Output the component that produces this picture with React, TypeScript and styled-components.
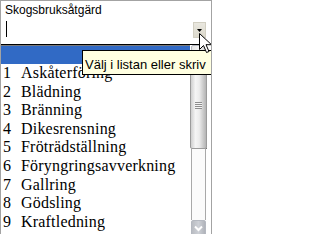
import React from "react";
import styled, { createGlobalStyle } from "styled-components";

const Global = createGlobalStyle`
  html, body { margin: 0; padding: 0; background: #ffffff; }
  * { box-sizing: border-box; }
`;

const Frame = styled.div`
  position: relative;
  width: 212px;
  height: 234px;
  border: 1px solid #a3a3a3;
  border-bottom: none;
  background: #ffffff;
  overflow: hidden;
  display: flex;
  flex-direction: column;
`;

const Label = styled.div`
  padding: 2px 0 0 4px;
  height: 16px;
  font: 12px/14px "Liberation Sans", Arial, sans-serif;
  color: #000;
`;

const InputRow = styled.div`
  height: 27px;
  display: flex;
  align-items: flex-start;
  padding-left: 5px;
`;

const Caret = styled.span`
  display: block;
  width: 1px;
  height: 16px;
  margin-top: 4px;
  background: #000;
`;

const DropButton = styled.div`
  margin-left: auto;
  margin-right: 5px;
  margin-top: 5px;
  width: 13px;
  height: 16px;
  background: linear-gradient(#e9e7df, #dcd9cc);
  border: 1px solid #d2cfc2;
  display: flex;
  align-items: center;
  justify-content: center;
`;

const ListBox = styled.div`
  flex: 1;
  display: flex;
  border-top: 1px solid #000;
  border-left: 1px solid #303030;
  margin-left: -1px;
  margin-right: 4px;
  min-height: 0;
`;

const Options = styled.div`
  flex: 1;
  padding-top: 1px;
  box-shadow: inset 0 1px 0 #7a7a7a;
  font: 16px/18.6px "Liberation Serif", "Times New Roman", serif;
  color: #000;
  letter-spacing: 0.2px;
`;

const OptionRow = styled.div<{ $selected?: boolean }>`
  display: flex;
  padding-left: 2px;
  height: ${(p) => (p.$selected ? "18px" : "18.6px")};
  background: ${(p) => (p.$selected ? "#316ac5" : "transparent")};
  color: ${(p) => (p.$selected ? "#fff" : "#000")};
  white-space: nowrap;
`;

const Num = styled.span`
  width: 18px;
  flex: none;
`;

const Name = styled.span``;

const Scrollbar = styled.div`
  width: 17px;
  flex: none;
  display: flex;
  flex-direction: column;
  overflow: hidden;
`;

const ArrowButton = styled.div<{ $dark?: boolean }>`
  flex: none;
  height: 17px;
  margin: 0 1px;
  border: 1px solid #b4b8c0;
  border-radius: 2px;
  background: ${(p) =>
    p.$dark
      ? "linear-gradient(to right, #b9bcc2, #cdd0d6 50%, #b0b3ba)"
      : "linear-gradient(to right, #e4e4e4, #f4f4f4 50%, #d8d8d8)"};
  display: flex;
  align-items: center;
  justify-content: center;
`;

const Thumb = styled.div`
  flex: none;
  height: 87px;
  border: 1px solid #9b9b9b;
  border-radius: 2px;
  box-shadow: 1px 0 0 #1a1a1a;
  background: linear-gradient(
    to right,
    #cfcfcf,
    #f5f5f5 30%,
    #ececec 55%,
    #c6c6c6 85%,
    #b4b4b4
  );
  display: flex;
  align-items: center;
  justify-content: center;
`;

const Grip = styled.div`
  width: 7px;
  height: 7px;
  background: repeating-linear-gradient(
    to bottom,
    #8d8d8d 0px,
    #8d8d8d 1px,
    #f4f4f4 1px,
    #f4f4f4 2px
  );
`;

const Track = styled.div`
  flex: none;
  height: 71px;
  margin: 0 1px;
  border-left: 1px solid #a9a9a9;
  border-right: 1px solid #a9a9a9;
  background: #fbfbfb;
`;

const Tooltip = styled.div`
  position: absolute;
  left: 81px;
  top: 49px;
  width: 131px;
  height: 25px;
  padding: 6px 0 0 2px;
  background: #ffffe1;
  border: 1px solid #000;
  font: 13px/15px "Liberation Sans", Arial, sans-serif;
  color: #000;
  white-space: nowrap;
  z-index: 2;
`;

const Pointer = styled.svg`
  position: absolute;
  left: 198px;
  top: 32px;
  z-index: 3;
`;

const items = [
  "Askåterföring",
  "Blädning",
  "Bränning",
  "Dikesrensning",
  "Fröträdställning",
  "Föryngringsavverkning",
  "Gallring",
  "Gödsling",
  "Kraftledning",
];

export default function App() {
  return (
    <>
      <Global />
      <Frame>
        <Label>Skogsbruksåtgärd</Label>
        <InputRow>
          <Caret />
          <DropButton>
            <svg width="5" height="3" viewBox="0 0 5 3">
              <path d="M0 0h5L2.5 3z" fill="#000" />
            </svg>
          </DropButton>
        </InputRow>
        <ListBox>
          <Options>
            <OptionRow $selected />
            {items.map((name, i) => (
              <OptionRow key={name}>
                <Num>{i + 1}</Num>
                <Name>{name}</Name>
              </OptionRow>
            ))}
          </Options>
          <Scrollbar>
            <ArrowButton />
            <Thumb>
              <Grip />
            </Thumb>
            <Track />
            <ArrowButton $dark>
              <svg width="9" height="7" viewBox="0 0 9 7">
                <path
                  d="M1 1.5l3.5 3.5L8 1.5"
                  fill="none"
                  stroke="#fff"
                  strokeWidth="2"
                />
              </svg>
            </ArrowButton>
          </Scrollbar>
        </ListBox>
        <Tooltip>Välj i listan eller skriv</Tooltip>
        <Pointer width="13" height="21" viewBox="0 0 13 21">
          <path
            d="M0.5 0.5v16l4-4 3 7 2.5-1-3-6.8h5.5z"
            fill="#fff"
            stroke="#000"
            strokeWidth="1"
            strokeLinejoin="miter"
          />
        </Pointer>
      </Frame>
    </>
  );
}
